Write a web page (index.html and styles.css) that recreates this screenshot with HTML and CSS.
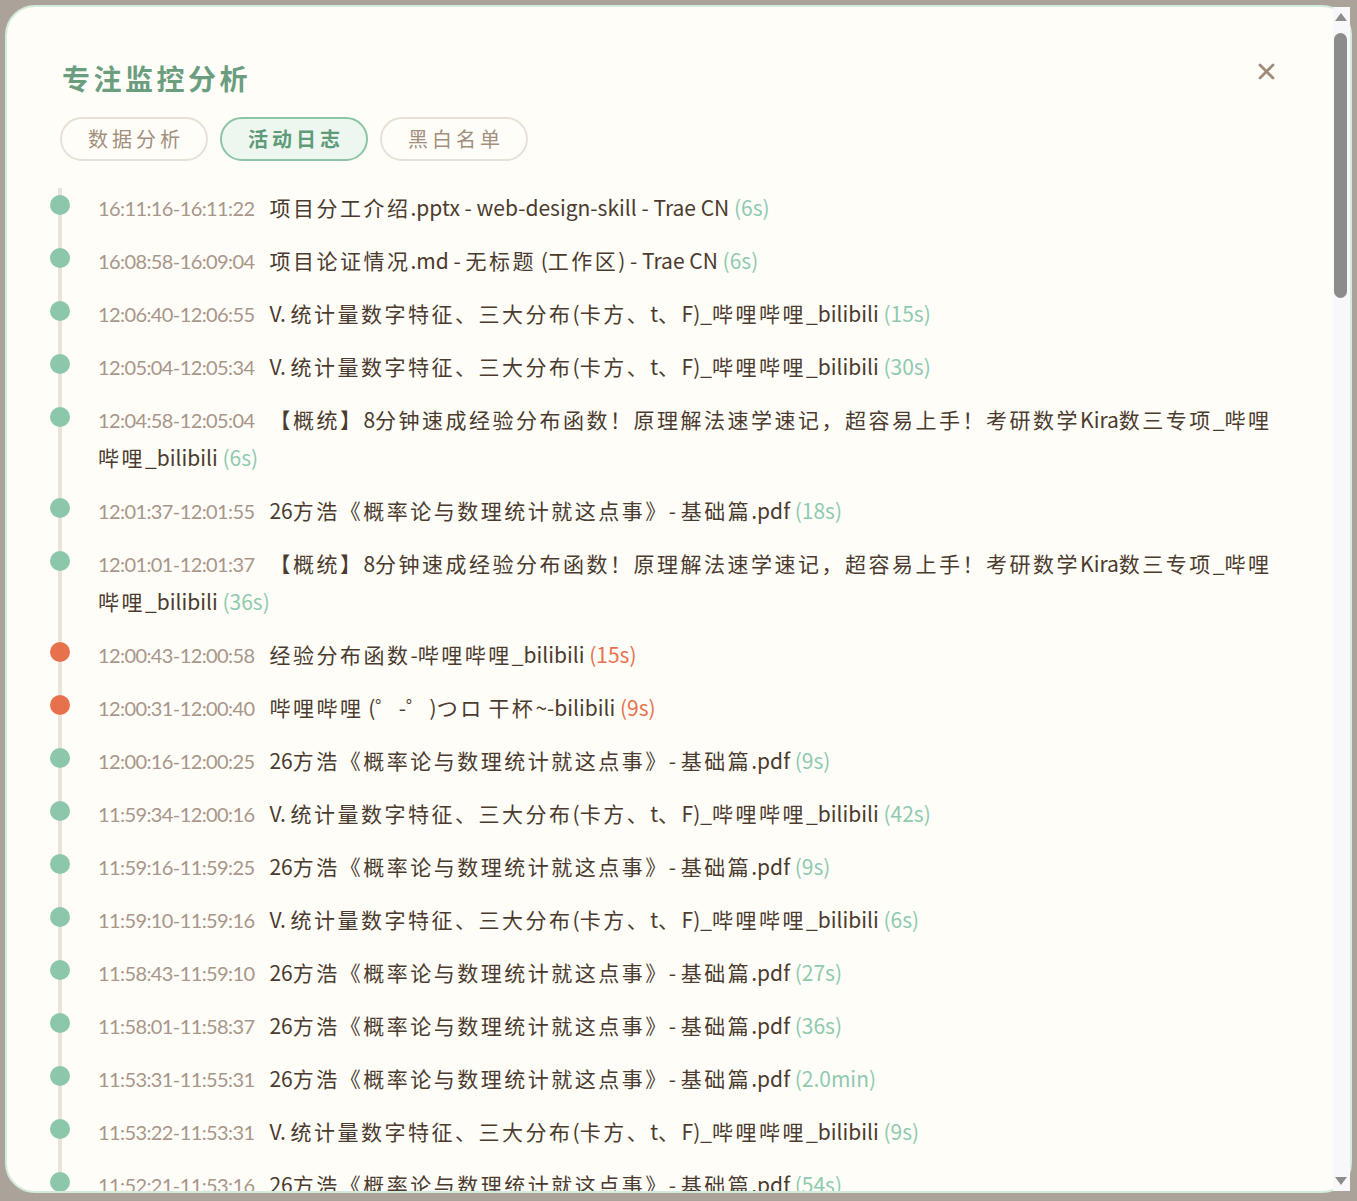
FILE: index.html
```html
<!DOCTYPE html>
<html lang="zh-CN">
<head>
    <meta charset="UTF-8">
    <meta name="viewport" content="width=device-width, initial-scale=1.0">
    <title>专注监控分析</title>
    <link rel="stylesheet" href="styles.css">
</head>
<body>
    <div class="modal">
        <div class="modal-body">
            <div class="modal-head">
                <h2 class="modal-title">专注监控分析</h2>
                <button class="close" title="关闭">
                    <svg width="17" height="17" viewBox="0 0 17 17"><path d="M2 2L15 15M15 2L2 15" stroke="#a08a78" stroke-width="2.8" stroke-linecap="round"/></svg>
                </button>
            </div>

            <div class="tabs">
                <button class="tab">数据分析</button>
                <button class="tab active">活动日志</button>
                <button class="tab">黑白名单</button>
            </div>

            <ul class="log" id="log"></ul>
        </div>

        <div class="scrollbar">
            <span class="sb-arrow up"></span>
            <span class="sb-thumb"></span>
            <span class="sb-arrow down"></span>
        </div>
    </div>

    <script>
        const PDF = '26方浩《概率论与数理统计就这点事》- 基础篇.pdf';
        const BILI = 'V. 统计量数字特征、三大分布(卡方、t、F)_哔哩哔哩_bilibili';
        const KIRA = '【概统】8分钟速成经验分布函数！原理解法速学速记，超容易上手！考研数学Kira数三专项_哔哩哔哩_bilibili';

        const logs = [
            ['16:11:16', '16:11:22', '项目分工介绍.pptx - web-design-skill - Trae CN', '6s'],
            ['16:08:58', '16:09:04', '项目论证情况.md - 无标题 (工作区) - Trae CN', '6s'],
            ['12:06:40', '12:06:55', BILI, '15s'],
            ['12:05:04', '12:05:34', BILI, '30s'],
            ['12:04:58', '12:05:04', KIRA, '6s'],
            ['12:01:37', '12:01:55', PDF, '18s'],
            ['12:01:01', '12:01:37', KIRA, '36s'],
            ['12:00:43', '12:00:58', '经验分布函数-哔哩哔哩_bilibili', '15s', true],
            ['12:00:31', '12:00:40', '哔哩哔哩 (゜-゜)つロ 干杯~-bilibili', '9s', true],
            ['12:00:16', '12:00:25', PDF, '9s'],
            ['11:59:34', '12:00:16', BILI, '42s'],
            ['11:59:16', '11:59:25', PDF, '9s'],
            ['11:59:10', '11:59:16', BILI, '6s'],
            ['11:58:43', '11:59:10', PDF, '27s'],
            ['11:58:01', '11:58:37', PDF, '36s'],
            ['11:53:31', '11:55:31', PDF, '2.0min'],
            ['11:53:22', '11:53:31', BILI, '9s'],
            ['11:52:21', '11:53:16', PDF, '54s']
        ];

        // older records of the morning session
        const older = [[BILI, 12], [PDF, 48], [PDF, 95], [BILI, 21], [PDF, 33], [KIRA, 9], [PDF, 140], [BILI, 15],
            [PDF, 27], [PDF, 62], [BILI, 6], [PDF, 18], [KIRA, 44], [PDF, 9], [BILI, 30], [PDF, 210], [PDF, 12],
            [BILI, 57], [PDF, 36], [PDF, 8], [BILI, 19], [PDF, 75], [KIRA, 14], [PDF, 24], [BILI, 11], [PDF, 180],
            [PDF, 39], [BILI, 7], [PDF, 51], [PDF, 16], [BILI, 26], [PDF, 88], [KIRA, 10], [PDF, 29], [BILI, 42],
            [PDF, 13], [PDF, 66], [BILI, 9], [PDF, 120], [PDF, 22], [BILI, 35], [PDF, 17], [KIRA, 28], [PDF, 47],
            [BILI, 8], [PDF, 150], [PDF, 31], [BILI, 14], [PDF, 23], [PDF, 58], [BILI, 20], [PDF, 11], [KIRA, 37],
            [PDF, 96], [BILI, 13], [PDF, 25], [PDF, 44], [BILI, 6], [PDF, 72], [PDF, 19], [BILI, 33], [PDF, 15],
            [KIRA, 12], [PDF, 105], [BILI, 27], [PDF, 38], [PDF, 9], [BILI, 18], [PDF, 61], [PDF, 26], [BILI, 10],
            [PDF, 49], [KIRA, 21], [PDF, 34]];

        function toSec(t) {
            const [h, m, s] = t.split(':').map(Number);
            return h * 3600 + m * 60 + s;
        }
        function toTime(sec) {
            const pad = n => String(n).padStart(2, '0');
            return pad(Math.floor(sec / 3600)) + ':' + pad(Math.floor(sec / 60) % 60) + ':' + pad(sec % 60);
        }

        let cursor = toSec('11:52:21');
        older.forEach(([title, dur], i) => {
            cursor -= 3 + (i % 5) * 4;
            const start = cursor - dur;
            logs.push([toTime(start), toTime(cursor), title, dur < 60 ? dur + 's' : (dur / 60).toFixed(1) + 'min']);
            cursor = start;
        });

        // CJK runs get wider tracking than latin text
        const spaced = text => text.replace(/([\u3000-\u30ff\u4e00-\u9fff\uff01-\uff60]+)/g, '<span class="cjk">$1</span>');

        document.getElementById('log').innerHTML = logs.map(([start, end, title, dur, off]) => `
            <li class="entry${off ? ' off' : ''}">
                <span class="time">${start}-${end}</span>${spaced(title)} <span class="dur">(${dur})</span>
            </li>`).join('');
    </script>
</body>
</html>
```

FILE: styles.css
```css
body {
    margin: 0;
    background-color: #aba399;
    font-family: "Noto Sans CJK SC", sans-serif;
}
.modal {
    box-sizing: border-box;
    display: flex;
    margin: 5px;
    height: calc(100vh - 13px);
    background-color: #fefdf8;
    border: 2px solid #d3ebdd;
    border-radius: 30px;
}
.modal-body {
    flex: 1;
    min-width: 0;
    padding: 51px 55px 0;
    overflow: hidden;
    border-radius: 28px 0 0 28px;
}
.scrollbar {
    flex: none;
    width: 17px;
    display: flex;
    flex-direction: column;
    align-items: center;
    background-color: #f8f8fb;
}
.sb-arrow {
    width: 0;
    height: 0;
    margin-right: 2px;
    border-left: 6.5px solid transparent;
    border-right: 6.5px solid transparent;
}
.sb-arrow.up {
    margin-top: 6px;
    border-bottom: 8px solid #8c8c8c;
}
.sb-arrow.down {
    margin-top: auto;
    margin-bottom: 6px;
    border-top: 8px solid #8c8c8c;
}
.sb-thumb {
    width: 13px;
    height: 265px;
    margin: 12px 2px 0 0;
    border-radius: 7px;
    background-color: #8c8c8c;
}
.modal-head {
    display: flex;
    justify-content: space-between;
    align-items: flex-start;
}
.modal-title {
    margin: 0;
    font-size: 28px;
    line-height: 40px;
    letter-spacing: 3.5px;
    font-weight: 700;
    color: #6b9e7f;
}
.close {
    margin-top: 3px;
    width: 24px;
    height: 24px;
    padding: 0;
    border: 0;
    background: none;
    cursor: pointer;
}
.tabs {
    display: flex;
    gap: 12px;
    margin-top: 19px;
    margin-left: -2px;
}
.tab {
    padding: 6px 22px 6px 26px;
    font-family: inherit;
    font-size: 20px;
    line-height: 28px;
    letter-spacing: 4px;
    color: #a28f7e;
    background: transparent;
    border: 2px solid #e7e0d6;
    border-radius: 22px;
    cursor: pointer;
}
.tab.active {
    color: #5f9a79;
    font-weight: 700;
    background-color: #eef6f0;
    border-color: #8cc5a5;
}
.log {
    list-style: none;
    margin: 27px 0 0 -4px;
    padding: 0 0 20px 36px;
    border-left: 4px solid #e9e3da;
}
.entry {
    position: relative;
    margin-bottom: 15px;
    font-size: 21px;
    line-height: 38px;
    color: #4b3b2e;
}
.entry::before {
    content: '';
    position: absolute;
    left: -48px;
    top: 7px;
    width: 20px;
    height: 20px;
    border-radius: 50%;
    background-color: #8dc7aa;
}
.entry.off::before {
    background-color: #e8714d;
}
.cjk {
    letter-spacing: 2.5px;
}
.time {
    margin-right: 15px;
    font-family: Lato, "Noto Sans CJK SC", sans-serif;
    font-size: 20px;
    line-height: 1;
    letter-spacing: -0.6px;
    color: #a8968a;
}
.dur {
    color: #8fcab0;
}
.entry.off .dur {
    color: #e8714d;
}
```
